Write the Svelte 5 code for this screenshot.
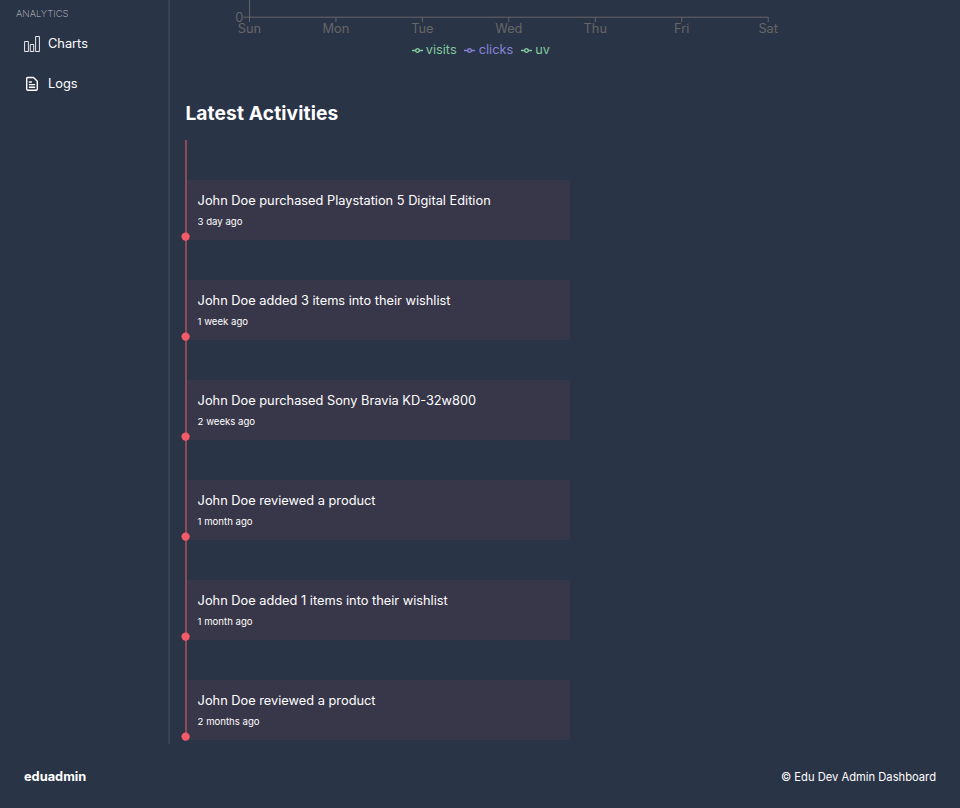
<script>
  const days = ['Sun', 'Mon', 'Tue', 'Wed', 'Thu', 'Fri', 'Sat'];
  const series = [
    { name: 'visits', color: '#82ca9d' },
    { name: 'clicks', color: '#8884d8' },
    { name: 'uv', color: '#82ca9d' }
  ];
  const activities = [
    { text: 'John Doe purchased Playstation 5 Digital Edition', time: '3 day ago' },
    { text: 'John Doe added 3 items into their wishlist', time: '1 week ago' },
    { text: 'John Doe purchased Sony Bravia KD-32w800', time: '2 weeks ago' },
    { text: 'John Doe reviewed a product', time: '1 month ago' },
    { text: 'John Doe added 1 items into their wishlist', time: '1 month ago' },
    { text: 'John Doe reviewed a product', time: '2 months ago' }
  ];
</script>

<div class="layout">
  <div class="container">
    <nav class="menu">
      <span class="title">ANALYTICS</span>
      <a class="item" href="#charts">
        <svg width="16" height="16" viewBox="0 0 16 16" fill="none" stroke="#fff">
          <path d="M.6 5.5h3.8v10H.6zM6.3 8.5h3.4v7H6.3zM11.6 .5h3.8v15h-3.8z" stroke-width=".9" />
        </svg>
        <span>Charts</span>
      </a>
      <a class="item" href="#logs">
        <svg width="16" height="16" viewBox="0 0 16 16" fill="none" stroke="#fff" stroke-width="1.4" stroke-linejoin="round" stroke-linecap="round">
          <path d="M3.7 1.5h5.8l3.8 3.8v7.7q0 1.3-1.3 1.3H4q-1.3 0-1.3-1.3V2.7q0-1.2 1-1.2z" />
          <path d="M5.4 6h2M5.4 8.6h5.2M5.4 11.2h5.2" />
        </svg>
        <span>Logs</span>
      </a>
    </nav>
    <main>
      <div class="chart">
        <svg width="600" height="38">
          <g stroke="#666" fill="none">
            <path d="M64.5 0V22M58.5 17.2H583" />
            {#each days as _, i}
              <path d="M{64.5 + i * 86.45} 17v5" />
            {/each}
          </g>
          <g class="ticks" fill="#666">
            <text x="58.3" y="21.5" text-anchor="end">0</text>
            {#each days as day, i}
              <text x={64.5 + i * 86.45} y="33" text-anchor="middle">{day}</text>
            {/each}
          </g>
        </svg>
        <div class="legend">
          {#each series as s}
            <span class="key" style="color: {s.color}">
              <svg width="11" height="11" viewBox="0 0 32 32" fill="none" stroke="currentColor" stroke-width="4">
                <path d="M0 16h10.67A5.33 5.33 0 1 1 21.33 16H32M21.33 16A5.33 5.33 0 1 1 10.67 16" />
              </svg>
              <span>{s.name}</span>
            </span>
          {/each}
        </div>
      </div>
      <h2>Latest Activities</h2>
      <ul>
        {#each activities as a}
          <li>
            <div class="card">
              <p>{a.text}</p>
              <time>{a.time}</time>
            </div>
          </li>
        {/each}
      </ul>
    </main>
  </div>
  <footer>
    <strong>eduadmin</strong>
    <span>© Edu Dev Admin Dashboard</span>
  </footer>
</div>

<style>
  :global(body) { margin: 0; background: #2a3447; overflow: hidden; }
  .layout { width: 960px; height: 808px; font-family: Inter, sans-serif; color: #fff; font-size: 12.8px; display: flex; flex-direction: column; background: #2a3447; }
  .container { display: flex; height: 744px; }
  .menu { box-sizing: border-box; width: 170px; padding: 8px 16px 0; border-right: 2px solid #384256; display: flex; flex-direction: column; }
  .title { font-size: 9.6px; line-height: 12px; font-weight: 200; color: #ddd; opacity: .85; }
  .item { height: 40px; margin-left: 8px; display: flex; align-items: center; gap: 8px; color: #fff; text-decoration: none; }
  .item span { line-height: 16px; padding-bottom: 1px; }
  .title + .item { margin-top: 4px; }
  main { padding-left: 15px; }
  .chart { height: 103px; }
  .chart > svg { display: block; }
  .ticks { font-size: 12.8px; }
  .legend { display: flex; gap: 7.8px; padding-left: 226.5px; margin-top: 3px; line-height: 18px; }
  .key { display: flex; align-items: center; gap: 3.2px; }
  h2 { margin: -2px 0 0 .4px; font-size: 19.2px; line-height: 24px; height: 37px; font-weight: 700; letter-spacing: .11px; }
  ul { list-style: none; margin: 2px 0 0; padding: 0; }
  li { position: relative; box-sizing: border-box; width: 384.6px; height: 100px; padding-top: 40px; border-left: 2px solid #f45b6980; }
  li::after { content: ''; position: absolute; left: -5px; bottom: -1px; width: 8px; height: 8px; border-radius: 50%; background: #f45b69; transform: translate(-.4px, -.4px) scale(1.04); }
  .card { box-sizing: border-box; height: 60px; padding: 13px 10.6px 0; background: #f45b6912; }
  p { margin: 0; line-height: 16px; }
  time { display: block; font-size: 9.6px; line-height: 12px; margin-top: 7px; }
  footer { height: 64px; padding: 0 24px; display: flex; align-items: center; justify-content: space-between; }
  footer span { font-size: 11.2px; padding-top: 1px; }
</style>
